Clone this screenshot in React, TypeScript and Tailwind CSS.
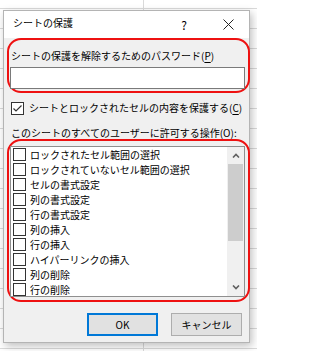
import { useState } from "react";

const items = [
  "ロックされたセル範囲の選択",
  "ロックされていないセル範囲の選択",
  "セルの書式設定",
  "列の書式設定",
  "行の書式設定",
  "列の挿入",
  "行の挿入",
  "ハイパーリンクの挿入",
  "列の削除",
  "行の削除",
];

function Box({ checked }: { checked?: boolean }) {
  return (
    <div className="flex h-[13px] w-[13px] shrink-0 items-center justify-center border border-[#333] bg-white">
      {checked && (
        <svg width="11" height="11" viewBox="0 0 11 11">
          <path d="M1.5 5.5 L4 8 L9.5 2.5" fill="none" stroke="#333" strokeWidth="1.2" />
        </svg>
      )}
    </div>
  );
}

function Chevron({ up }: { up?: boolean }) {
  return (
    <svg width="8" height="5" viewBox="0 0 8 5">
      <path d={up ? "M1 4.5 L4 1.5 L7 4.5" : "M1 0.5 L4 3.5 L7 0.5"} fill="none" stroke="#606060" strokeWidth="1.6" />
    </svg>
  );
}

export default function App() {
  const [protect, setProtect] = useState(true);
  const [password, setPassword] = useState("");

  return (
    <div className="h-[351px] w-[257px] overflow-hidden bg-white [background-image:repeating-linear-gradient(to_bottom,transparent_0px,transparent_8px,#dadada_8px,#dadada_9px,transparent_9px,transparent_20px),linear-gradient(to_right,transparent_143px,#dadada_143px,#dadada_144px,transparent_144px)] font-['Noto_Sans_CJK_JP',sans-serif] text-[10px] text-black">
      <div className="pl-[3px] pt-[10px]">
        <div className="flex h-[333px] w-[247px] flex-col border border-[#b4b4b4] bg-[#f0f0f0] shadow-[2px_3px_8px_rgba(0,0,0,0.25)]">
          {/* Title bar */}
          <div className="flex h-[27px] shrink-0 bg-white">
            <div className="flex-1 pl-[9px] pt-[5px] leading-[14px]">シートの保護</div>
            <div className="flex w-[46px] items-center justify-center text-[12px]">?</div>
            <div className="flex w-[42px] items-center justify-center">
              <svg width="11" height="11" viewBox="0 0 11 11">
                <path d="M0.5 0.5 L10.5 10.5 M10.5 0.5 L0.5 10.5" stroke="#222" strokeWidth="1" />
              </svg>
            </div>
          </div>

          {/* Password */}
          <div className="ml-[3px] h-[55px] w-[243px] rounded-[14px] border-2 border-[#ee1111] pt-[9px] pb-[2px]">
            <div className="pl-[2px] leading-[14px]">
              シートの保護を解除するためのパスワード(<span className="underline underline-offset-2">P</span>)
            </div>
            <input
              type="password"
              value={password}
              onChange={(e) => setPassword(e.target.value)}
              className="mt-[4px] ml-[1px] block h-[22px] w-[235px] border border-[#7a7a7a] bg-white px-1 outline-none"
            />
          </div>

          {/* Protect checkbox */}
          <div className="mt-[8px] ml-[7px] flex h-[14px] items-center gap-[5px] leading-[14px]" onClick={() => setProtect(!protect)}>
            <Box checked={protect} />
            <span>
              シートとロックされたセルの内容を保護する(<span className="underline underline-offset-2">C</span>)
            </span>
          </div>

          <div className="mt-[12px] ml-[7px] h-[12px] leading-[12px]">
            このシートのすべてのユーザーに許可する操作(<span className="underline underline-offset-2">O</span>):
          </div>

          {/* Allowed actions list */}
          <div className="ml-[3px] h-[163px] w-[243px] rounded-[14px] border-2 border-[#ee1111] pt-[5px] pb-[3px]">
            <div className="ml-[1px] flex h-[151px] w-[235px] border border-[#8f8f8f] bg-white">
              <div className="flex-1 overflow-hidden">
                {items.map((label) => (
                  <div key={label} className="flex h-[15px] items-center gap-[4px] pl-[2px] leading-[15px]">
                    <Box />
                    <span className="whitespace-nowrap">{label}</span>
                  </div>
                ))}
              </div>
              <div className="flex w-[17px] flex-col bg-[#f0f0f0]">
                <div className="flex h-[17px] items-center justify-center">
                  <Chevron up />
                </div>
                <div className="mx-[1px] h-[77px] bg-[#cdcdcd]" />
                <div className="flex-1" />
                <div className="flex h-[17px] items-center justify-center">
                  <Chevron />
                </div>
              </div>
            </div>
          </div>

          {/* Buttons */}
          <div className="mt-[11px] flex justify-end gap-[13px] pr-[7px]">
            <button className="h-[23px] w-[71px] border-2 border-[#0078d7] bg-[#e1e1e1] text-[10px]">OK</button>
            <button className="h-[23px] w-[71px] border border-[#adadad] bg-[#e1e1e1] text-[10px]">キャンセル</button>
          </div>
        </div>
      </div>
    </div>
  );
}
